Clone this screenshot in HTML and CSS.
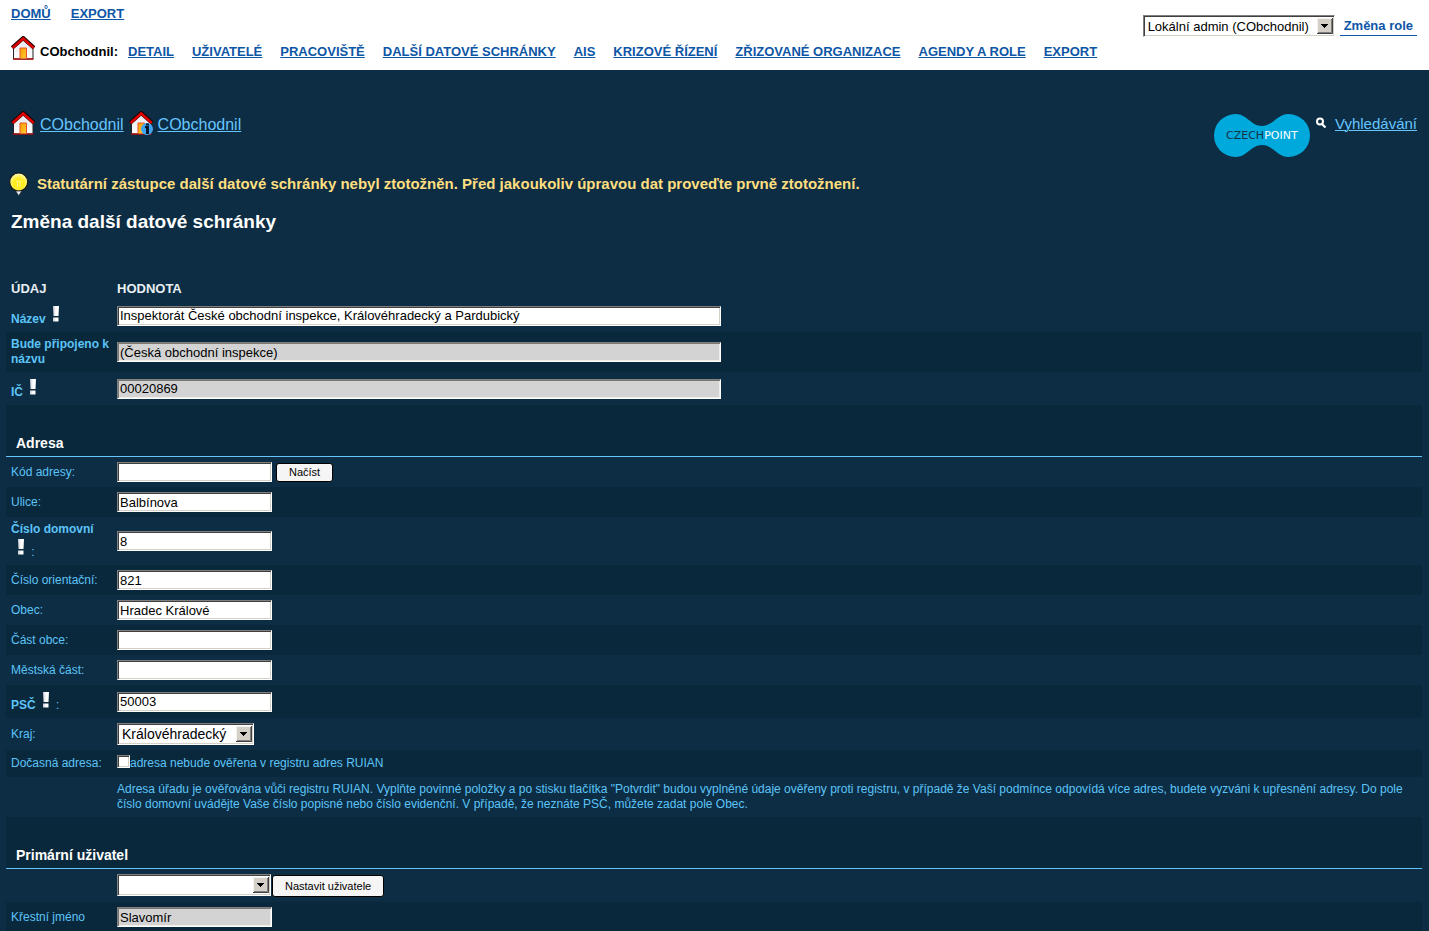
FILE: index.html
```html
<!DOCTYPE html>
<html lang="cs">
<head>
<meta charset="utf-8">
<title>Změna další datové schránky</title>
<link rel="stylesheet" href="styles.css">
</head>
<body>
<svg class="sprite" aria-hidden="true">
  <defs>
    <linearGradient id="door" x1="0" y1="0" x2="1" y2="1"><stop offset="0" stop-color="#f7a000"/><stop offset="1" stop-color="#ffc936"/></linearGradient>
    <linearGradient id="wall" x1="0" y1="0" x2="0" y2="1"><stop offset="0" stop-color="#e4e4ea"/><stop offset="1" stop-color="#ffffff"/></linearGradient>
    <radialGradient id="glow" cx=".5" cy=".6" r=".6"><stop offset="0" stop-color="#ffe600"/><stop offset=".55" stop-color="#ffee2e"/><stop offset="1" stop-color="#fffbd0"/></radialGradient>
    <linearGradient id="mark" x1="0" y1="0" x2="1" y2="0"><stop offset="0" stop-color="#c9ccd4"/><stop offset=".5" stop-color="#ffffff"/></linearGradient>
  </defs>
  <symbol id="house" viewBox="0 0 24 24">
    <path d="M2.500 11v12h19.500V11L12.200 2z" fill="url(#wall)" stroke="#222" stroke-width="1"/>
    <path d="M2 23h20.500" stroke="#b01010" stroke-width="1.500"/>
    <path d="M9 22.500V12h6.500v10.500" fill="url(#door)" stroke="#e8502a" stroke-width="1"/>
    <path d="M1.200 11.800L12.200 2 23 11.800" fill="none" stroke="#1a0000" stroke-width="4"/>
    <path d="M1.500 12L12.200 2.500 22.700 12" fill="none" stroke="#e00000" stroke-width="2.500"/>
  </symbol>
  <symbol id="bang" viewBox="0 0 17 19">
    <path d="M7 2h6l-.5 10h-5zM7 13.500h5.500v4H7z" fill="url(#mark)"/>
  </symbol>
  <symbol id="arrow" viewBox="0 0 16 16">
    <path d="M0 0h16v16H0z" fill="#d4d0c8"/>
    <path d="M.5 15.500V.5h15" fill="none" stroke="#f4f2ee"/>
    <path d="M15.500 0v15.500H0" fill="none" stroke="#404040"/>
    <path d="M14.500 1v13.500H1" fill="none" stroke="#808080"/>
    <path d="M4 6h7v1h-1v1H9v1H8v1H7V9H6V8H5V7H4z" fill="#000"/>
  </symbol>
</svg>

<header class="top">
  <div class="menus">
    <nav class="menu">
      <a href="#">DOMŮ</a>
      <a href="#">EXPORT</a>
    </nav>
    <nav class="menu menu-org">
      <span class="org"><svg class="house"><use href="#house"/></svg><b>CObchodnil:</b></span>
      <a href="#">DETAIL</a>
      <a href="#">UŽIVATELÉ</a>
      <a href="#">PRACOVIŠTĚ</a>
      <a href="#">DALŠÍ DATOVÉ SCHRÁNKY</a>
      <a href="#">AIS</a>
      <a href="#">KRIZOVÉ ŘÍZENÍ</a>
      <a href="#">ZŘIZOVANÉ ORGANIZACE</a>
      <a href="#">AGENDY A ROLE</a>
      <a href="#">EXPORT</a>
    </nav>
  </div>
  <form class="role">
    <span class="pick pick-role"><select aria-label="Role"><option>Lokální admin (CObchodnil)</option></select><svg class="arrow"><use href="#arrow"/></svg></span>
    <a class="role-link" href="#">Změna role</a>
  </form>
</header>

<main>
  <div class="bar">
    <nav class="crumbs">
      <svg class="house"><use href="#house"/></svg>
      <a href="#">CObchodnil</a>
      <svg class="house" viewBox="0 0 24 24"><use href="#house" width="24" height="24"/><circle cx="18" cy="18" r="6" fill="#3fa4f4"/><path d="M16 15h4v8h-3v-6h-1zM17 12.500h3v2h-3z" fill="#06182c"/></svg>
      <a href="#">CObchodnil</a>
    </nav>
    <div class="search">
      <svg class="logo" viewBox="0 0 96 43" role="img" aria-label="CzechPoint">
        <path d="M21.500 0C33 0 37 12 48 12S63 0 74.500 0a21.500 21.500 0 0 1 0 43C63 43 59 31 48 31S33 43 21.500 43a21.500 21.500 0 0 1 0-43z" fill="#00a9dc"/>
        <text class="logo-text" x="12" y="25" fill="#15303f">CZECH<tspan fill="#fff">POINT</tspan></text>
      </svg>
      <svg class="lens" viewBox="0 0 12 12"><circle cx="5" cy="4.500" r="3" fill="none" stroke="#fff" stroke-width="2"/><path d="M7 7l3.500 3.500" stroke="#fff" stroke-width="2.200"/></svg>
      <a href="#">Vyhledávání</a>
    </div>
  </div>

  <p class="hint">
    <svg class="bulb" viewBox="0 0 20 24"><path d="M5.500 17L9.700 23.500 14 17z" fill="#eef1f6" stroke="#333" stroke-width=".5"/><circle cx="9.700" cy="10" r="9" fill="url(#glow)" stroke="#1a1a10" stroke-width="1.200"/><path d="M7 9l1.500 1 1-1 1.500 1 1.500-1M8.500 10v5M11 10v5" fill="none" stroke="#fff9a0"/></svg>
    Statutární zástupce další datové schránky nebyl ztotožněn. Před jakoukoliv úpravou dat proveďte prvně ztotožnení.
  </p>
  <h1>Změna další datové schránky</h1>

  <form>
  <table>
    <thead>
      <tr><th class="name" scope="col">ÚDAJ</th><th scope="col">HODNOTA</th></tr>
    </thead>
    <tbody>
      <tr><th scope="row"><label class="must" for="nazev">Název</label><svg class="bang"><use href="#bang"/></svg></th><td><input class="wide" id="nazev" type="text" value="Inspektorát České obchodní inspekce, Královéhradecký a Pardubický"></td></tr>
      <tr><th scope="row"><label class="must" for="pripojeno">Bude připojeno k názvu</label></th><td><input class="wide" id="pripojeno" type="text" readonly value="(Česká obchodní inspekce)"></td></tr>
      <tr><th scope="row"><label class="must" for="ic">IČ</label><svg class="bang"><use href="#bang"/></svg></th><td><input class="wide" id="ic" type="text" readonly value="00020869"></td></tr>
      <tr class="section"><td colspan="2"><h2>Adresa</h2></td></tr>
      <tr><th scope="row"><label for="kod">Kód adresy:</label></th><td><div class="field"><input id="kod" type="text"><button type="button">Načíst</button></div></td></tr>
      <tr><th scope="row"><label for="ulice">Ulice:</label></th><td><input id="ulice" type="text" value="Balbínova"></td></tr>
      <tr><th scope="row"><label class="must" for="domovni">Číslo domovní</label><br><svg class="bang"><use href="#bang"/></svg> :</th><td><input id="domovni" type="text" value="8"></td></tr>
      <tr><th scope="row"><label for="orient">Číslo orientační:</label></th><td><input id="orient" type="text" value="821"></td></tr>
      <tr><th scope="row"><label for="obec">Obec:</label></th><td><input id="obec" type="text" value="Hradec Králové"></td></tr>
      <tr><th scope="row"><label for="cast">Část obce:</label></th><td><input id="cast" type="text"></td></tr>
      <tr><th scope="row"><label for="mestska">Městská část:</label></th><td><input id="mestska" type="text"></td></tr>
      <tr><th scope="row"><label class="must" for="psc">PSČ</label><svg class="bang"><use href="#bang"/></svg> :</th><td><input id="psc" type="text" value="50003"></td></tr>
      <tr><th scope="row"><label for="kraj">Kraj:</label></th><td><span class="pick pick-region"><select id="kraj"><option>Královéhradecký</option></select><svg class="arrow"><use href="#arrow"/></svg></span></td></tr>
      <tr><th scope="row">Dočasná adresa:</th><td><div class="tick"><input id="docasna" type="checkbox"><label for="docasna">adresa nebude ověřena v registru adres RUIAN</label></div></td></tr>
      <tr><th></th><td>Adresa úřadu je ověřována vůči registru RUIAN. Vyplňte povinné položky a po stisku tlačítka "Potvrdit" budou vyplněné údaje ověřeny proti registru, v případě že Vaší podmínce odpovídá více adres, budete vyzváni k upřesnění adresy. Do pole číslo domovní uvádějte Vaše číslo popisné nebo číslo evidenční. V případě, že neznáte PSČ, můžete zadat pole Obec.</td></tr>
      <tr class="section"><td colspan="2"><h2>Primární uživatel</h2></td></tr>
      <tr><th></th><td><div class="field field-user"><span class="pick pick-user"><select aria-label="Primární uživatel"><option></option></select><svg class="arrow"><use href="#arrow"/></svg></span><button type="button">Nastavit uživatele</button></div></td></tr>
      <tr><th scope="row"><label for="jmeno">Křestní jméno</label></th><td><input id="jmeno" type="text" readonly value="Slavomír"></td></tr>
    </tbody>
  </table>
  </form>
</main>
</body>
</html>
```
FILE: styles.css
```css
* { box-sizing: border-box; }

html { overflow: hidden; }

body {
  margin: 0;
  background: #0c2d43;
  color: #5cc4f8;
  font: 12px/15px "Liberation Sans", Arial, sans-serif;
}

.sprite { position: absolute; width: 0; height: 0; }

svg { flex: none; }

/* White header */
.top {
  display: flex;
  justify-content: space-between;
  align-items: flex-start;
  background: #fff;
  padding: 6px 12px 10px 11px;
}

.menu {
  display: flex;
  gap: 20px;
  font-size: 13px;
  font-weight: bold;
  line-height: 16px;
}

.menu a, .role-link { color: #0d56a6; }

.menu-org {
  align-items: flex-end;
  gap: 18px;
  margin-top: 14px;
}

.org {
  display: flex;
  align-items: flex-end;
  gap: 5px;
  margin-right: -8px;
  color: #000;
}

.house { width: 24px; height: 24px; }

.role {
  display: flex;
  align-items: center;
  gap: 5px;
  margin-top: 9px;
}

.role-link {
  padding: 0 4px;
  border-bottom: 1px solid #0d56a6;
  font-size: 13px;
  font-weight: bold;
  line-height: 19px;
  text-decoration: none;
}

/* Breadcrumbs and search */
main { padding: 40px 7px 0 6px; }

.bar {
  display: flex;
  justify-content: space-between;
  align-items: flex-start;
  padding: 0 5px;
  font-size: 16px;
  line-height: 20px;
}

.bar a { color: #66c5ff; text-decoration-thickness: 1px; }

.crumbs, .search { display: flex; gap: 5px; }

.crumbs { align-items: center; padding-top: 5px; }

.crumbs .house { margin-top: -4px; }

.search { align-items: flex-start; padding-top: 4px; font-size: 15px; }

.logo { width: 96px; height: 43px; }

.logo-text { font: 11px "DejaVu Sans", sans-serif; }

.lens { width: 12px; height: 12px; margin: 3px 3px 0 0; }

.hint {
  display: flex;
  align-items: center;
  gap: 8px;
  margin: 15px 0 0 3px;
  color: #ffdf80;
  font-size: 15px;
  font-weight: bold;
  line-height: 24px;
}

.bulb { width: 20px; height: 24px; }

h1 {
  margin: 14px 5px 45px;
  color: #fff;
  font-size: 19px;
  line-height: 24px;
}

/* Form table */
table {
  width: 100%;
  border-collapse: collapse;
}

th, td {
  padding: 5px;
  text-align: left;
  font-weight: normal;
  vertical-align: middle;
}

th { padding-right: 2px; }

.name { width: 106px; }

thead th {
  padding-top: 2px;
  padding-bottom: 3px;
  color: #e8eef2;
  font-size: 13px;
  font-weight: bold;
}

tbody tr:nth-child(even) { background: #0a283b; }

.must { font-weight: bold; }

.bang { width: 17px; height: 19px; }

.section { border-bottom: 1px solid #66c5ff; }

.section td { padding: 30px 10px 5px; }

h2 {
  margin: 0;
  color: #fff;
  font-size: 14px;
  line-height: 16px;
}

input, select, button { margin: 0; font-family: inherit; }

input[type="text"], .pick select, .tick input {
  display: block;
  border: 1px solid;
  border-color: #808080 #fff #fff #808080;
  border-radius: 0;
  background: #fff;
  box-shadow: inset 1px 1px 0 #404040, inset -1px -1px 0 #d4d0c8;
  color: #000;
  font-size: 13px;
}

input[type="text"] {
  width: 155px;
  height: 20px;
  padding: 0 2px;
}

input[type="text"].wide { width: 604px; max-width: 100%; }

input[type="text"][readonly] {
  background: #d3d3d3;
  box-shadow: inset 1px 1px 0 #7a7672, inset -1px -1px 0 #f0eeea;
}

.field { display: flex; gap: 4px; align-items: center; }

.field-user { gap: 1px; align-items: flex-start; }

button {
  height: 19px;
  padding: 0 12px;
  border: 1px solid #000;
  border-radius: 3px;
  background: #f5f5f5;
  color: #000;
  font-size: 11px;
}

.field-user button { height: 22px; margin-top: 1px; }

.pick { position: relative; display: block; }

.pick select {
  width: 100%;
  height: 22px;
  padding: 0 20px 0 4px;
  appearance: none;
}

.pick-region select { font-size: 14px; }

.arrow {
  position: absolute;
  top: 2px;
  right: 2px;
  width: 16px;
  height: 18px;
  pointer-events: none;
}

.pick-role { width: 192px; }

.pick-region { width: 137px; }

.pick-user { width: 154px; }

.tick { display: flex; align-items: flex-start; min-height: 16px; line-height: 17px; }

.tick input {
  width: 13px;
  height: 13px;
  appearance: none;
}
```
